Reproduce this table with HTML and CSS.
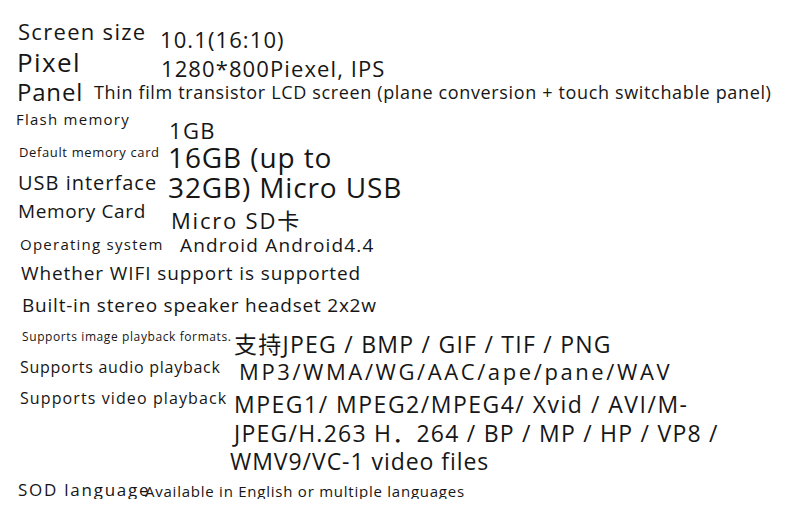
FILE: index.html
```html
<!DOCTYPE html>
<html lang="en">
<head>
    <meta charset="UTF-8">
    <meta name="viewport" content="width=device-width, initial-scale=1.0">
    <title>Tablet Specifications</title>
    <link rel="stylesheet" href="styles.css">
</head>
<body>
    <div class="sheet">
        <div class="row screen"><span class="key">Screen size</span><span class="val">10.1(16:10)</span></div>
        <div class="row pixel"><span class="key">Pixel</span><span class="val">1280*800Piexel, IPS</span></div>
        <div class="row panel"><span class="key">Panel</span><span class="val">Thin film transistor LCD screen (plane conversion + touch switchable panel)</span></div>
        <div class="row flash"><span class="key">Flash memory</span><span class="val">1GB</span></div>
        <div class="row card"><span class="key">Default memory card</span><span class="val">16GB (up to</span></div>
        <div class="row usb"><span class="key">USB interface</span><span class="val">32GB) Micro USB</span></div>
        <div class="row memory"><span class="key">Memory Card</span><span class="val">Micro SD卡</span></div>
        <div class="row os"><span class="key">Operating system</span><span class="val">Android Android4.4</span></div>
        <div class="row wifi"><span class="key">Whether WIFI support is supported</span></div>
        <div class="row speaker"><span class="key">Built-in stereo speaker headset 2x2w</span></div>
        <div class="row image"><span class="key">Supports image playback formats.</span><span class="val">支持JPEG / BMP / GIF / TIF / PNG</span></div>
        <div class="row audio"><span class="key">Supports audio playback</span><span class="val">MP3/WMA/WG/AAC/ape/pane/WAV</span></div>
        <div class="row video">
            <span class="key">Supports video playback</span>
            <div class="val">
                <span class="line first">MPEG1/ MPEG2/MPEG4/ Xvid / AVI/M-</span>
                <span class="line second">JPEG/H.263 H．264 / BP / MP / HP / VP8 /</span>
                <span class="line third">WMV9/VC-1 video files</span>
            </div>
        </div>
        <div class="row lang"><span class="key">SOD language</span><span class="val">Available in English or multiple languages</span></div>
    </div>
</body>
</html>
```

FILE: styles.css
```css
* {
    box-sizing: border-box;
}
body {
    margin: 0;
    background: #ffffff;
    color: #161616;
    font-family: "Open Sans", "Noto Sans CJK SC", sans-serif;
}
.sheet {
    padding-top: 20px;
}
.row {
    display: flex;
    align-items: flex-start;
    white-space: nowrap;
}
.key, .val {
    line-height: 1;
}
.key {
    flex-shrink: 0;
}

.screen { height: 29px; }
.screen .key { padding-left: 18px; width: 160px; font-size: 22px; letter-spacing: 1.3px; }
.screen .val { font-size: 22px; margin-top: 8px; letter-spacing: 1.1px; }

.pixel { height: 31px; }
.pixel .key { padding-left: 17px; width: 161px; font-size: 26px; letter-spacing: 1.4px; }
.pixel .val { font-size: 22px; margin-top: 8px; letter-spacing: 1.1px; }

.panel { height: 32px; }
.panel .key { padding-left: 17px; width: 94px; font-size: 24px; letter-spacing: 0.8px; }
.panel .val { font-size: 18px; margin-top: 3px; letter-spacing: 0.65px; }

.flash { height: 31px; }
.flash .key { padding-left: 16px; width: 169px; font-size: 15px; letter-spacing: 1.25px; }
.flash .val { font-size: 22px; margin-top: 7px; letter-spacing: 1.3px; }

.card { height: 30px; }
.card .key { padding-left: 19px; width: 168px; font-size: 13px; margin-top: 3px; letter-spacing: 0.63px; }
.card .val { font-size: 28px; letter-spacing: 0.9px; }

.usb { height: 29px; }
.usb .key { padding-left: 18px; width: 168px; font-size: 20px; letter-spacing: 1px; }
.usb .val { font-size: 28px; letter-spacing: 0.87px; }

.memory { height: 34px; }
.memory .key { padding-left: 18px; width: 171px; font-size: 19px; letter-spacing: 0.64px; }
.memory .val { font-size: 22px; margin-top: 7px; letter-spacing: 1.8px; }

.os { height: 28px; }
.os .key { padding-left: 20px; width: 180px; font-size: 15px; margin-top: 1px; letter-spacing: 1.25px; }
.os .val { font-size: 19px; letter-spacing: 1.17px; }

.wifi { height: 32px; }
.wifi .key { padding-left: 21px; font-size: 19px; letter-spacing: 0.9px; }

.speaker { height: 35px; }
.speaker .key { padding-left: 22px; font-size: 19px; letter-spacing: 0.78px; }

.image { height: 28px; }
.image .key { padding-left: 22px; width: 234px; font-size: 12px; letter-spacing: 0.6px; }
.image .val { font-size: 23px; margin-top: 2px; letter-spacing: 1.25px; }

.audio { height: 31px; }
.audio .key { padding-left: 20px; width: 239px; font-size: 16px; letter-spacing: 0.74px; }
.audio .val { font-size: 22px; margin-top: 1px; letter-spacing: 2.6px; }

.video { height: 91px; }
.video .key { padding-left: 20px; width: 234px; font-size: 16px; letter-spacing: 1.1px; }
.video .val { font-size: 23px; line-height: 28.5px; }
.video .line { display: block; }
.video .first { letter-spacing: 1.5px; }
.video .second { letter-spacing: 1.24px; }
.video .third { margin-left: -4px; letter-spacing: 0.95px; }

.lang .key { padding-left: 18px; width: 145px; font-size: 17px; letter-spacing: 1.75px; }
.lang .val { font-size: 15px; margin-top: 3px; letter-spacing: 0.76px; }
```
